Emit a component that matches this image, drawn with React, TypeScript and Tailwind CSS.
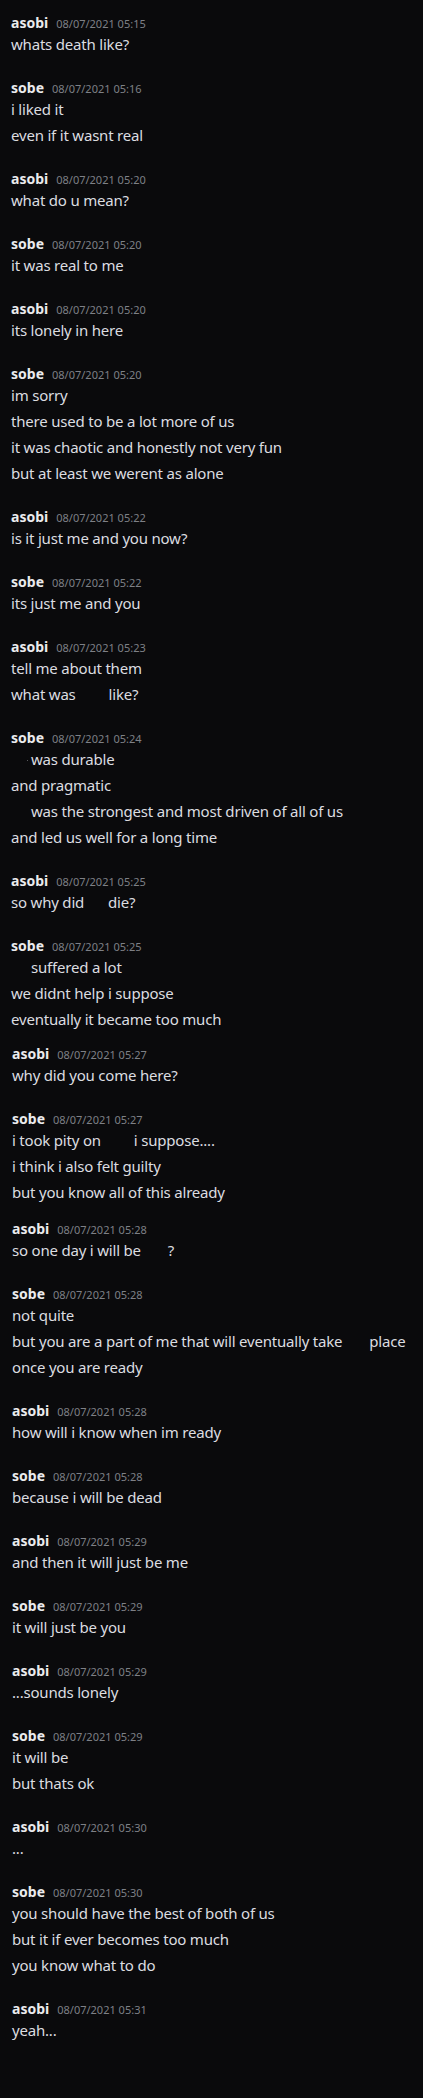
import React from 'react';

type Seg = string | { gap: number } | { dot: true };
type Line = Seg[] | string;

interface Group {
  name: 'asobi' | 'sobe';
  time: string;
  lines: Line[];
  tight?: number;
  shift?: boolean;
}

const g = (n: number) => ({ gap: n });

const groups: Group[] = [
  { name: 'asobi', time: '05:15', lines: ['whats death like?'] },
  { name: 'sobe', time: '05:16', lines: ['i liked it', 'even if it wasnt real'] },
  { name: 'asobi', time: '05:20', lines: ['what do u mean?'] },
  { name: 'sobe', time: '05:20', lines: ['it was real to me'] },
  { name: 'asobi', time: '05:20', lines: ['its lonely in here'] },
  {
    name: 'sobe',
    time: '05:20',
    lines: [
      'im sorry',
      'there used to be a lot more of us',
      'it was chaotic and honestly not very fun',
      'but at least we werent as alone',
    ],
  },
  { name: 'asobi', time: '05:22', lines: ['is it just me and you now?'] },
  { name: 'sobe', time: '05:22', lines: ['its just me and you'] },
  { name: 'asobi', time: '05:23', lines: ['tell me about them', ['what was', g(33), 'like?']] },
  {
    name: 'sobe',
    time: '05:24',
    lines: [
      [g(16), { dot: true }, g(3), 'was durable'],
      'and pragmatic',
      [g(20), 'was the strongest and most driven of all of us'],
      'and led us well for a long time',
    ],
  },
  { name: 'asobi', time: '05:25', lines: [['so why did', g(24), 'die?']] },
  {
    name: 'sobe',
    time: '05:25',
    lines: [[g(20), 'suffered a lot'], 'we didnt help i suppose', 'eventually it became too much'],
  },
  { name: 'asobi', time: '05:27', lines: ['why did you come here?'], tight: 13, shift: true },
  {
    name: 'sobe',
    time: '05:27',
    lines: [['i took pity on', g(33), 'i suppose....'], 'i think i also felt guilty', 'but you know all of this already'],
    shift: true,
  },
  { name: 'asobi', time: '05:28', lines: [['so one day i will be', g(27), '?']], tight: 15, shift: true },
  {
    name: 'sobe',
    time: '05:28',
    lines: ['not quite', ['but you are a part of me that will eventually take', g(27), 'place'], 'once you are ready'],
    shift: true,
  },
  { name: 'asobi', time: '05:28', lines: ['how will i know when im ready'], shift: true },
  { name: 'sobe', time: '05:28', lines: ['because i will be dead'], shift: true },
  { name: 'asobi', time: '05:29', lines: ['and then it will just be me'], shift: true },
  { name: 'sobe', time: '05:29', lines: ['it will just be you'], shift: true },
  { name: 'asobi', time: '05:29', lines: ['...sounds lonely'], shift: true },
  { name: 'sobe', time: '05:29', lines: ['it will be', 'but thats ok'], shift: true },
  { name: 'asobi', time: '05:30', lines: ['...'], shift: true },
  {
    name: 'sobe',
    time: '05:30',
    lines: ['you should have the best of both of us', 'but it if ever becomes too much', 'you know what to do'],
    shift: true,
  },
  { name: 'asobi', time: '05:31', lines: ['yeah...'], shift: true },
];

function MessageLine({ line }: { line: Line }) {
  const segs = typeof line === 'string' ? [line] : line;
  return (
    <div className="h-[26px] leading-[26px] whitespace-pre text-[15px] tracking-[-0.2px] text-[#dcdde0]">
      {segs.map((s, i) => {
        if (typeof s === 'string') return <span key={i}>{s}</span>;
        if ('dot' in s) return <span key={i} className="inline-block w-px h-px bg-[#5a5a5e] align-middle" />;
        return <span key={i} className="inline-block" style={{ width: s.gap }} />;
      })}
    </div>
  );
}

function MessageGroup({ group, first }: { group: Group; first: boolean }) {
  const mt = first ? '' : group.tight === 13 ? 'mt-[13px]' : group.tight === 15 ? 'mt-[15px]' : 'mt-[22px]';
  return (
    <div className={`${mt} ${group.shift ? 'pl-[12px]' : 'pl-[11px]'}`}>
      <div className="flex items-baseline h-[17px] leading-[17px]">
        <span className="text-[14px] font-bold text-[#ebebed]">{group.name}</span>
        <span className="ml-[8px] text-[11px] text-[#7e8086]">08/07/2021 {group.time}</span>
      </div>
      {group.lines.map((l, i) => (
        <MessageLine key={i} line={l} />
      ))}
    </div>
  );
}

export default function App() {
  return (
    <div
      className="min-h-screen bg-[#0a0a0c] pt-[14px] pb-10"
      style={{ fontFamily: '"Noto Sans", "Open Sans", sans-serif' }}
    >
      {groups.map((gr, i) => (
        <MessageGroup key={i} group={gr} first={i === 0} />
      ))}
    </div>
  );
}
